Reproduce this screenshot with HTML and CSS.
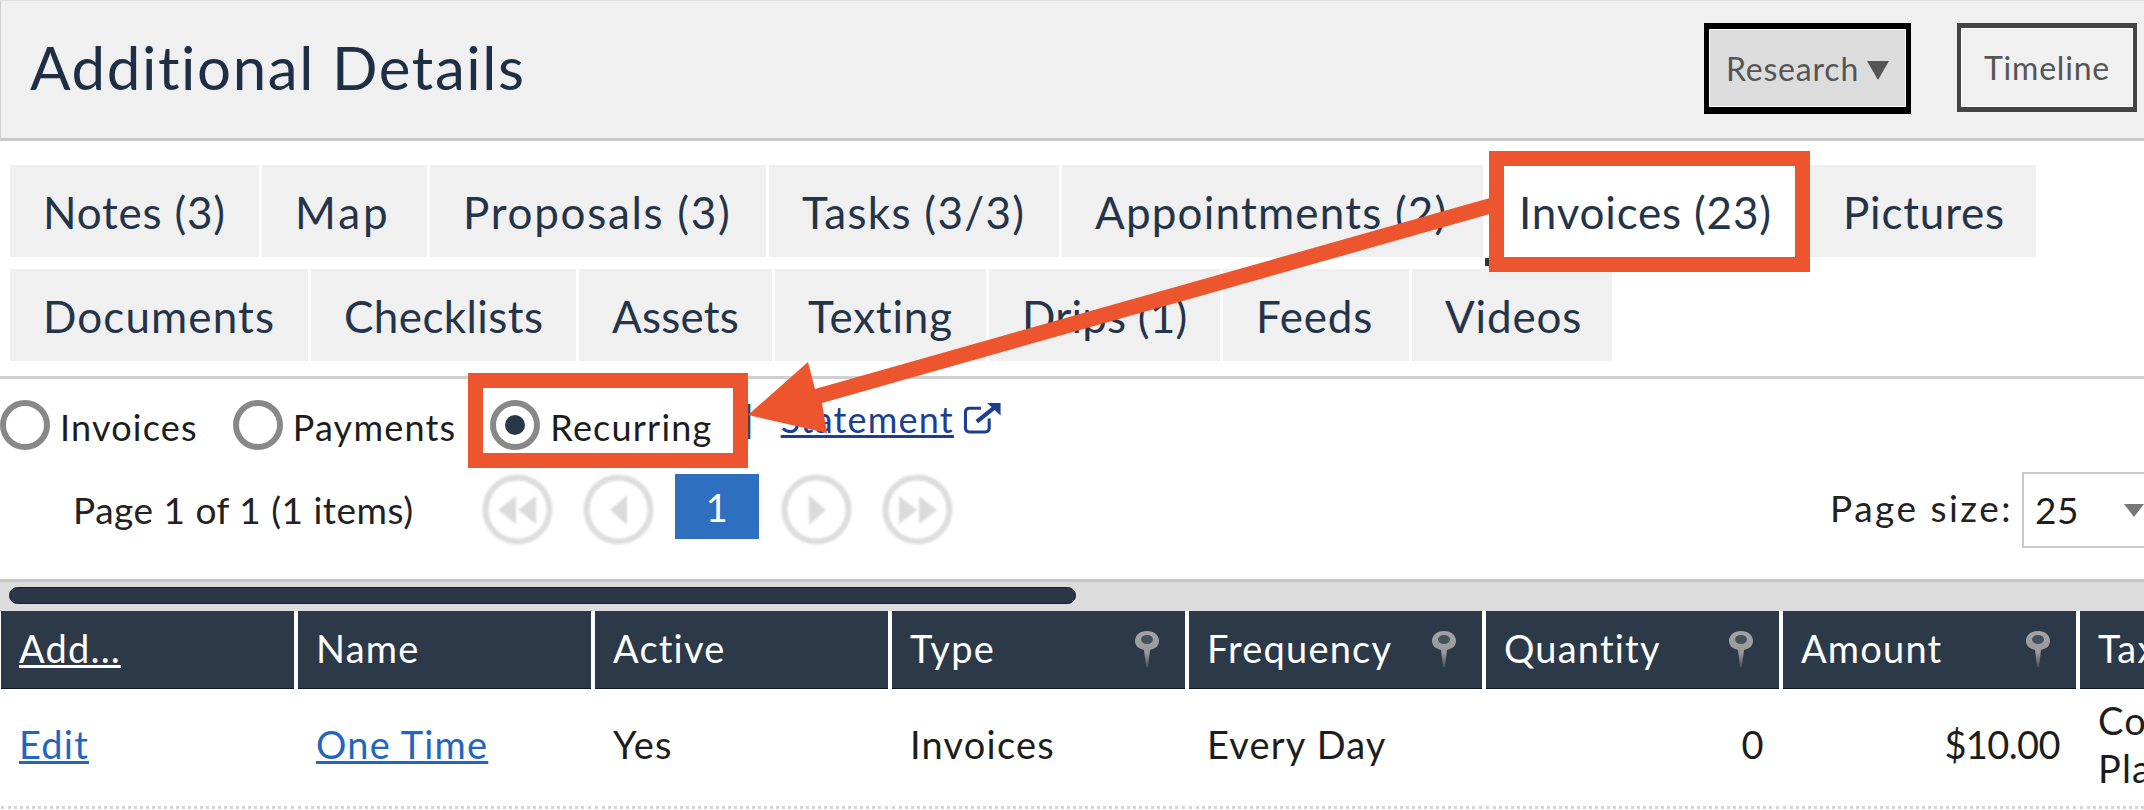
FILE: index.html
```html
<!DOCTYPE html>
<html lang="en">
<head>
    <meta charset="UTF-8">
    <title>Additional Details</title>
    <link rel="stylesheet" href="styles.css">
</head>
<body>
<svg class="defs" width="0" height="0">
    <defs>
        <linearGradient id="pinFade" x1="0" y1="0" x2="0" y2="1">
            <stop offset="0" stop-color="#a3a3a3"/>
            <stop offset="0.6" stop-color="#999"/>
            <stop offset="1" stop-color="#46525f"/>
        </linearGradient>
        <symbol id="pin" viewBox="0 0 26 36">
            <path d="M13 0C20 0 25 4 25 10C25 14.500 22 17.500 16 19L14 36H12L10 19C4 17.500 1 14.500 1 10C1 4 6 0 13 0Z" fill="url(#pinFade)"/>
            <ellipse cx="13" cy="8.500" rx="6" ry="4.500" fill="#44505e"/>
        </symbol>
    </defs>
</svg>
<div id="page">
    <div class="header">
        <h1 class="title">Additional Details</h1>
        <div class="header-btns">
            <a class="btn btn-research">Research<span class="caret"></span></a>
            <a class="btn btn-timeline">Timeline</a>
        </div>
    </div>

    <div class="tabs">
        <div class="tab-row">
            <a class="tab tab-notes">Notes (3)</a>
            <a class="tab tab-map">Map</a>
            <a class="tab tab-proposals">Proposals (3)</a>
            <a class="tab tab-tasks">Tasks (3/3)</a>
            <a class="tab tab-appts">Appointments (2)</a>
            <a class="tab tab-invoices active">Invoices (23)</a>
            <a class="tab tab-pictures">Pictures</a>
        </div>
        <div class="tab-row">
            <a class="tab tab-docs">Documents</a>
            <a class="tab tab-checklists">Checklists</a>
            <a class="tab tab-assets">Assets</a>
            <a class="tab tab-texting">Texting</a>
            <a class="tab tab-drips">Drips (1)</a>
            <a class="tab tab-feeds">Feeds</a>
            <a class="tab tab-videos">Videos</a>
        </div>
    </div>

    <div class="filters">
        <label class="radio-item item-invoices"><span class="radio"></span><span class="radio-text">Invoices</span></label>
        <label class="radio-item item-payments"><span class="radio"></span><span class="radio-text">Payments</span></label>
        <label class="radio-item item-recurring"><span class="radio checked"></span><span class="radio-text">Recurring</span></label>
        <span class="sep">|</span>
        <a class="statement">Statement</a>
        <svg class="ext-icon" viewBox="0 0 38 32" width="40" height="33" fill="none" stroke="#1b3f94" stroke-width="3">
            <path d="M25 17V26C25 28.500 23.500 30 21 30H6C3.500 30 2 28.500 2 26V11C2 8.500 3.500 7 6 7H17"/>
            <path d="M13 20L33 4" stroke-width="4"/>
            <path d="M23 2H36V14Z" fill="#1b3f94" stroke="none"/>
        </svg>
    </div>

    <div class="pager">
        <div class="page-info">Page 1 of 1 (1 items)</div>
        <svg class="page-btn" viewBox="0 0 71 71"><circle cx="35.500" cy="35.500" r="32"/><path d="M34 22V50L16 36ZM54 22V50L36 36Z"/></svg>
        <svg class="page-btn btn-prev" viewBox="0 0 71 71"><circle cx="35.500" cy="35.500" r="32"/><path d="M44 21V51L27 36Z"/></svg>
        <div class="page-num">1</div>
        <svg class="page-btn btn-next" viewBox="0 0 71 71"><circle cx="35.500" cy="35.500" r="32"/><path d="M28 21V51L45 36Z"/></svg>
        <svg class="page-btn btn-last" viewBox="0 0 71 71"><circle cx="35.500" cy="35.500" r="32"/><path d="M17 22V50L35 36ZM37 22V50L55 36Z"/></svg>
        <div class="page-size">
            <span class="size-label">Page size:</span>
            <div class="size-select">25<span class="size-caret"></span></div>
        </div>
    </div>

    <div class="scroll-track"><div class="scroll-thumb"></div></div>

    <div class="grid">
        <div class="th"><a class="th-link">Add...</a></div>
        <div class="th">Name</div>
        <div class="th">Active</div>
        <div class="th">Type<svg class="pin"><use href="#pin"/></svg></div>
        <div class="th">Frequency<svg class="pin"><use href="#pin"/></svg></div>
        <div class="th">Quantity<svg class="pin"><use href="#pin"/></svg></div>
        <div class="th">Amount<svg class="pin"><use href="#pin"/></svg></div>
        <div class="th">Tax</div>

        <div class="td"><a class="link">Edit</a></div>
        <div class="td"><a class="link">One Time</a></div>
        <div class="td">Yes</div>
        <div class="td">Invoices</div>
        <div class="td">Every Day</div>
        <div class="td num">0</div>
        <div class="td num">$10.00</div>
        <div class="td tax">Country<br>Place</div>
    </div>
</div>

<!-- callouts on top of the screenshot -->
<svg class="callouts" viewBox="0 0 2144 810" width="2144" height="810">
    <rect x="1485" y="258" width="6" height="8" fill="#333"/>
    <rect x="1496.500" y="158.500" width="306" height="106" fill="none" stroke="#ec552d" stroke-width="15"/>
    <rect x="475.500" y="380.500" width="265" height="80" fill="none" stroke="#ec552d" stroke-width="15"/>
    <polygon points="748,415 808,362 815,389 1504,194 1504,210 822,403 827,433" fill="#ec552d"/>
</svg>
</body>
</html>
```

FILE: styles.css
```css
*{
    margin: 0;
    padding: 0;
    box-sizing: border-box;
}
html, body{
    width: 2144px;
    height: 810px;
    overflow: hidden;
    background-color: #fff;
}
body{
    position: relative;
    font-family: "Lato", "Liberation Sans", sans-serif;
    color: #1d1d1d;
}
.defs{
    position: absolute;
}
#page{
    width: 2144px;
    height: 810px;
    overflow: hidden;
}

/* header */
.header{
    height: 141px;
    display: flex;
    align-items: flex-start;
    justify-content: space-between;
    background-color: #f0f0f0;
    border-top: 1px solid #dedede;
    border-left: 1px solid #cfcfcf;
    border-bottom: 3px solid #c9c9c9;
    padding: 22px 7px 0 29px;
}
.title{
    font-size: 60px;
    font-weight: 400;
    letter-spacing: 1.6px;
    line-height: 90px;
    color: #1e2f45;
    margin-top: -1px;
}
.header-btns{
    display: flex;
    align-items: flex-start;
    gap: 46px;
}
.btn{
    display: flex;
    align-items: center;
    justify-content: center;
    font-size: 32px;
    letter-spacing: 0.8px;
    color: #555;
    box-shadow: inset 0 0 0 1px #fff;
}
.btn-research{
    width: 207px;
    height: 91px;
    border: 5px solid #000;
    border-width: 6px 5px 7px;
    background-color: #dcdcdc;
}
.btn-timeline{
    width: 180px;
    height: 89px;
    border: 5px solid #444;
    border-width: 5px 4px 5px 4px;
}
.caret{
    width: 0;
    height: 0;
    margin-left: 8px;
    margin-top: 4px;
    border-left: 11px solid transparent;
    border-right: 11px solid transparent;
    border-top: 19px solid #555;
}

/* tabs */
.tabs{
    height: 238px;
    padding: 24px 0 0 10px;
    border-bottom: 3px solid #cfcfcf;
}
.tab-row{
    display: flex;
    gap: 3px;
    margin-bottom: 12px;
}
.tab{
    height: 92px;
    display: flex;
    align-items: center;
    padding: 2px 0 0 33px;
    font-size: 44px;
    letter-spacing: 0.8px;
    color: #24344a;
    background-color: #f0f0f0;
    white-space: nowrap;
}
.tab.active{
    background-color: #fff;
}
.tab-notes{ width: 249px; }
.tab-map{ width: 165px; letter-spacing: 3px; }
.tab-proposals{ width: 336px; letter-spacing: 1.7px; }
.tab-tasks{ width: 290px; letter-spacing: 1.3px; }
.tab-appts{ width: 421px; letter-spacing: 1.2px; }
.tab-invoices{ width: 321px; }
.tab-pictures{ width: 226px; }
.tab-docs{ width: 298px; letter-spacing: 1.1px; }
.tab-checklists{ width: 265px; letter-spacing: 0.4px; }
.tab-assets{ width: 193px; letter-spacing: 0.2px; }
.tab-texting{ width: 211px; }
.tab-drips{ width: 231px; letter-spacing: 0.2px; }
.tab-feeds{ width: 186px; }
.tab-videos{ width: 200px; }

/* radio row */
.filters{
    height: 68px;
    margin-top: 18px;
    display: flex;
    align-items: flex-start;
    font-size: 36px;
    letter-spacing: 1.2px;
    color: #1d1d1d;
}
.radio-item{
    display: flex;
    align-items: center;
    gap: 10px;
    line-height: 50px;
}
.radio-text{
    margin-top: 5px;
}
.item-payments{
    margin-left: 35px;
}
.item-recurring{
    margin-left: 34px;
}
.radio{
    width: 50px;
    height: 50px;
    border: 6px solid #888;
    border-radius: 50%;
    display: flex;
    align-items: center;
    justify-content: center;
    background-color: #fff;
    flex-shrink: 0;
}
.radio.checked::after{
    content: "";
    width: 20px;
    height: 20px;
    border-radius: 50%;
    background-color: #2a3749;
}
.sep{
    margin-left: 32px;
    line-height: 44px;
    color: #444;
}
.statement{
    margin-left: 26px;
    line-height: 44px;
    color: #1b3f94;
    text-decoration: underline;
}
.ext-icon{
    margin: 4px 0 0 9px;
}

/* pager */
.pager{
    height: 76px;
    margin-top: 7px;
    display: flex;
    align-items: flex-start;
    font-size: 37px;
    letter-spacing: 0.5px;
}
.page-info{
    width: 482px;
    flex-shrink: 0;
    padding-left: 73px;
    line-height: 76px;
    color: #222;
    white-space: nowrap;
}
.page-btn{
    width: 71px;
    height: 71px;
    flex-shrink: 0;
    margin-top: 2px;
    filter: blur(0.9px);
}
.page-btn circle{
    fill: #fff;
    stroke: #ddd;
    stroke-width: 6;
}
.page-btn path{
    fill: #dbdbdb;
}
.btn-prev{
    margin-left: 30px;
}
.btn-next{
    margin-left: 22px;
}
.btn-last{
    margin-left: 30px;
}
.page-num{
    width: 84px;
    height: 65px;
    flex-shrink: 0;
    margin: 2px 0 0 21px;
    display: flex;
    align-items: center;
    justify-content: center;
    background-color: #2f6fc0;
    color: #fff;
    font-size: 38px;
}
.page-size{
    margin-left: 877px;
    flex-shrink: 0;
    display: flex;
    align-items: flex-start;
    gap: 13px;
    line-height: 72px;
    color: #222;
}
.size-label{
    width: 179px;
    letter-spacing: 2.5px;
    white-space: nowrap;
}
.size-select{
    width: 180px;
    height: 76px;
    padding-left: 11px;
    border: 2px solid #c9c9c9;
    position: relative;
    color: #1d1d1d;
}
.size-caret{
    position: absolute;
    left: 100px;
    top: 30px;
    width: 0;
    height: 0;
    border-left: 10px solid transparent;
    border-right: 10px solid transparent;
    border-top: 13px solid #777;
}

/* scrollbar */
.scroll-track{
    height: 32px;
    margin-top: 31px;
    padding: 5px 0 0 9px;
    background-color: #dcdcdc;
    border-top: 3px solid #c6c6c6;
}
.scroll-thumb{
    width: 1067px;
    height: 17px;
    background-color: #2a3749;
    border-radius: 9px;
    border: 1px solid #161f2b;
}

/* table */
.grid{
    display: grid;
    grid-template-columns: repeat(8, 293px);
    column-gap: 4px;
    padding-left: 1px;
    background-color: #fff;
}
.th{
    height: 78px;
    position: relative;
    display: flex;
    align-items: center;
    padding: 0 0 4px 18px;
    font-size: 38px;
    letter-spacing: 1.2px;
    color: #fff;
    background-color: #2b3949;
    border-bottom: 1px solid #0e1620;
}
.th-link{
    text-decoration: underline;
}
.pin{
    position: absolute;
    left: 242px;
    top: 20px;
    width: 26px;
    height: 36px;
}
.td{
    height: 120px;
    padding: 0 18px 8px;
    display: flex;
    align-items: center;
    font-size: 38px;
    letter-spacing: 1.2px;
    color: #1d1d1d;
    border-bottom: 3px dotted #d5d5d5;
    white-space: nowrap;
}
.td.num{
    justify-content: flex-end;
    letter-spacing: -0.6px;
    padding-right: 16px;
}
.tax{
    line-height: 48px;
}
.link{
    color: #1f66c1;
    text-decoration: underline;
}

/* callouts */
.callouts{
    position: absolute;
    left: 0;
    top: 0;
    pointer-events: none;
}
```
